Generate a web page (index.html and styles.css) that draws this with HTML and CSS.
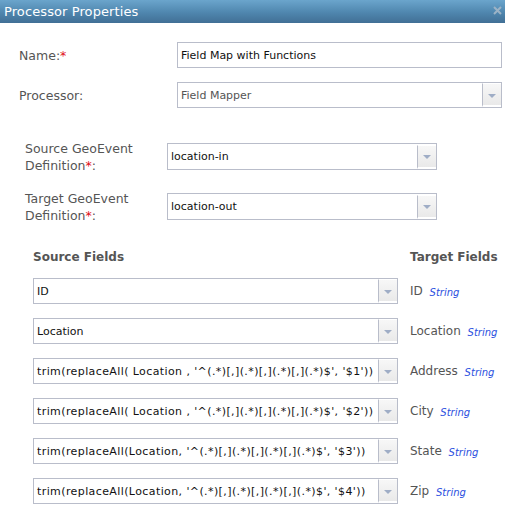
FILE: index.html
```html
<!DOCTYPE html>
<html>
<head>
<meta charset="utf-8">
<title>Processor Properties</title>
<link rel="stylesheet" href="styles.css">
</head>
<body>
<div class="dialog">
  <div class="titlebar">
    <span class="title">Processor Properties</span>
    <span class="close">
      <svg width="9" height="9" viewBox="0 0 9 9"><path d="M1 1 L8 8 M8 1 L1 8" stroke="#9cb3c6" stroke-width="2" fill="none"/></svg>
    </span>
  </div>

  <div class="content">
    <div class="row main-row">
      <label class="label">Name:<span class="req">*</span></label>
      <div class="box text-box">Field Map with Functions</div>
    </div>
    <div class="row main-row second">
      <label class="label">Processor:</label>
      <div class="box select muted"><span class="val">Field Mapper</span><span class="btn"><i class="arrow"></i></span></div>
    </div>

    <div class="geo">
      <div class="row geo-row">
        <label class="label">Source GeoEvent<br>Definition<span class="req">*</span>:</label>
        <div class="box select"><span class="val">location-in</span><span class="btn"><i class="arrow"></i></span></div>
      </div>
      <div class="row geo-row">
        <label class="label">Target GeoEvent<br>Definition<span class="req">*</span>:</label>
        <div class="box select"><span class="val">location-out</span><span class="btn"><i class="arrow"></i></span></div>
      </div>
    </div>

    <div class="fields">
      <div class="fhead">
        <span class="head">Source Fields</span>
        <span class="head">Target Fields</span>
      </div>
      <div class="frow">
        <div class="box select"><span class="val">ID</span><span class="btn"><i class="arrow"></i></span></div>
        <div class="target">ID <em>String</em></div>
      </div>
      <div class="frow">
        <div class="box select"><span class="val">Location</span><span class="btn"><i class="arrow"></i></span></div>
        <div class="target">Location <em>String</em></div>
      </div>
      <div class="frow">
        <div class="box select"><span class="val expr">trim(replaceAll( Location , '^(.*)[,](.*)[,](.*)[,](.*)$', '$1'))</span><span class="btn"><i class="arrow"></i></span></div>
        <div class="target">Address <em>String</em></div>
      </div>
      <div class="frow">
        <div class="box select"><span class="val expr">trim(replaceAll( Location , '^(.*)[,](.*)[,](.*)[,](.*)$', '$2'))</span><span class="btn"><i class="arrow"></i></span></div>
        <div class="target">City <em>String</em></div>
      </div>
      <div class="frow">
        <div class="box select"><span class="val expr">trim(replaceAll(Location, '^(.*)[,](.*)[,](.*)[,](.*)$', '$3'))</span><span class="btn"><i class="arrow"></i></span></div>
        <div class="target">State <em>String</em></div>
      </div>
      <div class="frow">
        <div class="box select"><span class="val expr">trim(replaceAll(Location, '^(.*)[,](.*)[,](.*)[,](.*)$', '$4'))</span><span class="btn"><i class="arrow"></i></span></div>
        <div class="target">Zip <em>String</em></div>
      </div>
    </div>
  </div>
</div>
</body>
</html>
```

FILE: styles.css
```css
html, body {
  margin: 0;
  padding: 0;
  background: #fff;
}

body {
  font-family: "DejaVu Sans", Verdana, sans-serif;
  color: #555;
  width: 505px;
  height: 509px;
  overflow: hidden;
}

.titlebar {
  height: 23px;
  background: linear-gradient(#6ba5cc, #4f86ae 55%, #416f95);
  display: flex;
  align-items: center;
  justify-content: space-between;
  padding: 0 3px 0 4px;
}

.title {
  color: #fff;
  font-size: 13px;
  letter-spacing: 0.1px;
}

.close {
  display: flex;
  margin-top: -2px;
}

.content {
  padding: 19px 0 0;
}

.row {
  display: flex;
  align-items: center;
}

.label {
  font-size: 12.5px;
  line-height: 17px;
  color: #555;
}

.req {
  color: #e0101a;
}

.main-row {
  padding-left: 19px;
}

.main-row .label {
  width: 158px;
}

.main-row .box {
  width: 325px;
}

.main-row.second {
  margin-top: 14px;
}

.box {
  box-sizing: border-box;
  height: 26px;
  border: 1px solid #b9bdca;
  background: #fff;
  font-size: 11px;
  color: #111;
  display: flex;
  align-items: center;
}

.text-box {
  padding-left: 3px;
}

.select .val {
  flex: 1;
  padding-left: 3px;
  white-space: nowrap;
  overflow: hidden;
}

.select .expr {
  letter-spacing: 0.4px;
}

.muted .val {
  color: #555;
}

.select .btn {
  width: 19px;
  height: 24px;
  box-sizing: border-box;
  border-left: 1px solid #b9bdca;
  border-top: 1px solid #fff;
  border-bottom: 2px solid #fff;
  background: linear-gradient(#f7f7f7, #e9e9e9);
  display: flex;
  align-items: center;
  justify-content: center;
}

.arrow {
  width: 0;
  height: 0;
  border-left: 4px solid transparent;
  border-right: 4px solid transparent;
  border-top: 4px solid #9fadc6;
  margin-top: 2px;
}

.geo {
  padding-left: 25px;
  margin-top: 35px;
}

.geo-row {
  height: 27px;
}

.geo-row + .geo-row {
  margin-top: 23px;
}

.geo-row .label {
  width: 142px;
}

.geo-row .box {
  width: 270px;
  height: 27px;
}

.fields {
  padding-left: 33px;
  margin-top: 26px;
}

.fhead {
  display: flex;
  height: 22px;
  align-items: center;
}

.head {
  font-weight: bold;
  font-size: 12px;
  color: #555;
}

.fhead .head:first-child {
  width: 377px;
}

.frow {
  display: flex;
  align-items: center;
  margin-top: 14px;
}

.fhead + .frow {
  margin-top: 10px;
}

.frow .box {
  width: 365px;
}

.target {
  margin-left: 12px;
  font-size: 12px;
  color: #555;
  white-space: nowrap;
}

.target em {
  font-size: 10px;
  color: #2b4fe0;
  margin-left: 3px;
  vertical-align: -1px;
}
```
